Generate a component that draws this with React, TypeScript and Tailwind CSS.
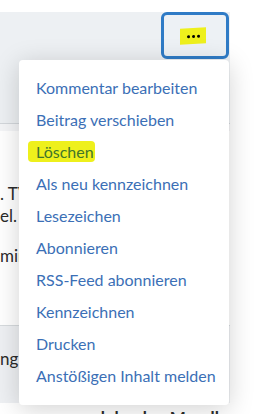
const menuItems = [
  'Kommentar bearbeiten',
  'Beitrag verschieben',
  'Löschen',
  'Als neu kennzeichnen',
  'Lesezeichen',
  'Abonnieren',
  'RSS-Feed abonnieren',
  'Kennzeichnen',
  'Drucken',
  'Anstößigen Inhalt melden',
];

export default function App() {
  return (
    <div className="relative h-[414px] w-[255px] overflow-hidden bg-white font-['Lato',sans-serif]">
      <div className="w-[230px]">
        <div className="h-3" />

        {/* post header */}
        <div className="flex h-[112px] items-start justify-end border-b border-[#d3d7db] bg-[#edf0f3] pr-px">
          <button className="flex h-[47px] w-[68px] items-center justify-center rounded-md border-[3px] border-[#2f7bc6] bg-[#edf1f5]">
            <span className="-ml-1 flex h-[16px] w-[26px] -skew-y-3 items-center justify-center gap-[2px] bg-[#eef01c]">
              <span className="h-[3px] w-[3px] rounded-full bg-black" />
              <span className="h-[3px] w-[3px] rounded-full bg-black" />
              <span className="h-[3px] w-[3px] rounded-full bg-black" />
            </span>
          </button>
        </div>

        {/* post body */}
        <div className="h-[201px] overflow-hidden bg-white text-[17px] leading-[22px] text-[#2b2b2b]">
          <div className="h-[7px] bg-[#f4f5f7]" />
          <p className="whitespace-nowrap pt-[52px]">. TV und im Radio</p>
          <p className="whitespace-nowrap">el. Das Thema</p>
          <p className="mt-[18px] whitespace-nowrap">mindestens zwei</p>
        </div>

        {/* next post header */}
        <div className="h-[78px] border-t border-[#d6dadd] bg-[#eef0f3] pt-[22px] text-[17px] leading-[22px] text-[#2b2b2b]">
          <p className="whitespace-nowrap">ng zum Thema</p>
        </div>

        <div className="whitespace-nowrap pl-[92px] pt-[4px] text-[17px] font-bold leading-[22px] text-[#2b2b2b]">
          ab lenden Moodle
        </div>
      </div>

      {/* dropdown menu */}
      <div className="absolute left-[19px] top-[60px] w-[210px] rounded bg-white pb-[13px] pl-[17px] pt-3 shadow-[0_4px_26px_rgba(0,0,0,0.18)]">
        {menuItems.map((item) =>
          item === 'Löschen' ? (
            <div key={item} className="h-8 text-[16px] leading-8">
              <span className="-ml-2 rounded-sm bg-[#eef01c] py-[1px] pl-2 pr-px text-[#41752a]">
                {item}
              </span>
            </div>
          ) : (
            <div key={item} className="h-8 whitespace-nowrap text-[16px] leading-8 text-[#3b6fb6]">
              {item}
            </div>
          )
        )}
      </div>
    </div>
  );
}
